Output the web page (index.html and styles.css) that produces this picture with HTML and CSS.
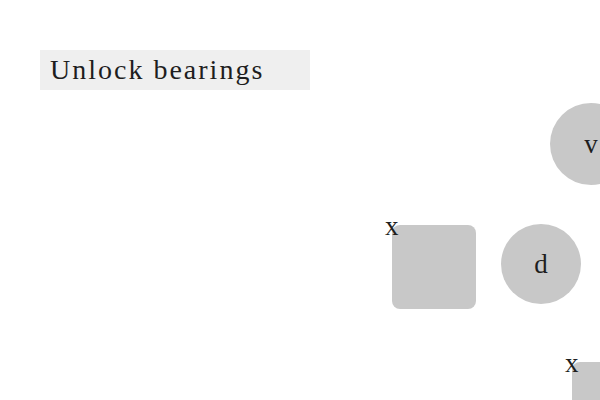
FILE: index.html
```html
<!DOCTYPE html>
<html>
<head>
<meta charset="utf-8">
<link rel="stylesheet" href="styles.css">
</head>
<body>
<div class="canvas">
  <div class="title">Unlock bearings</div>
  <div class="node circle c-v">v</div>
  <div class="node square s-1"><span class="tag">x</span></div>
  <div class="node circle c-d">d</div>
  <div class="node square s-2"><span class="tag">x</span></div>
</div>
</body>
</html>
```
FILE: styles.css
```css
html, body {
  margin: 0;
  padding: 0;
  background: #ffffff;
}
.canvas {
  position: relative;
  width: 600px;
  height: 400px;
  overflow: hidden;
  font-family: "Liberation Serif", "DejaVu Serif", serif;
  color: #1e1e1e;
}
.title {
  position: absolute;
  left: 40px;
  top: 50px;
  width: 260px;
  height: 40px;
  padding-left: 10px;
  background: #efefef;
  font-size: 28px;
  letter-spacing: 2px;
  line-height: 40px;
}
.node {
  position: absolute;
  background: #c8c8c8;
  display: flex;
  align-items: center;
  justify-content: center;
  font-size: 27px;
}
.circle {
  border-radius: 50%;
}
.c-v {
  left: 550px;
  top: 103px;
  width: 82px;
  height: 82px;
}
.c-d {
  left: 501px;
  top: 224px;
  width: 80px;
  height: 80px;
}
.square {
  width: 84px;
  height: 84px;
  border-radius: 8px;
}
.s-1 {
  left: 392px;
  top: 225px;
}
.s-2 {
  left: 572px;
  top: 362px;
}
.tag {
  position: absolute;
  left: -7px;
  top: -12px;
  font-size: 27px;
  line-height: 26px;
}
```
